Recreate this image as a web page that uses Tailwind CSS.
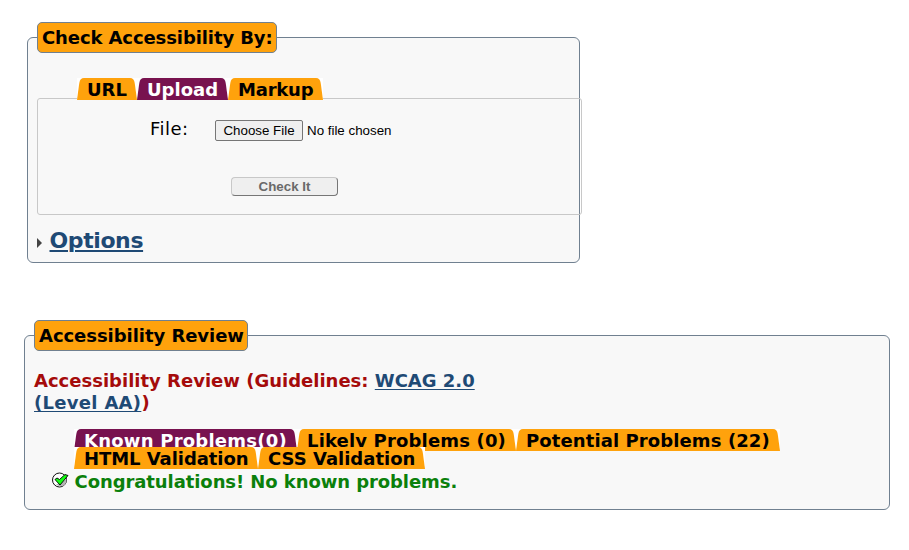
<!DOCTYPE html>
<html lang="en">
<head>
<meta charset="utf-8">
<title>Accessibility Review</title>
<script src="https://cdn.jsdelivr.net/npm/@tailwindcss/browser@4"></script>
</head>
<body class="w-[909px] h-[550px] overflow-hidden bg-white text-black font-['DejaVu_Sans',sans-serif] text-[18px] leading-[22px]">
<svg class="hidden">
  <symbol id="l" viewBox="0 0 8 22"><path d="M0 22 L2.3 5 Q3 0 7 0 H8 V22Z" fill="currentColor"/></symbol>
  <symbol id="r" viewBox="0 0 8 22"><path d="M8 22 L5.7 5 Q5 0 1 0 H0 V22Z" fill="currentColor"/></symbol>
</svg>
<main class="flow-root">
  <section class="mt-[37px] ml-[27px] w-[553px] h-[226px] border border-[#708090] rounded-[6px] bg-[#f8f8f8]">
    <h2 class="-mt-[16px] ml-[9px] w-[240px] h-[31px] border border-[#708090] rounded-[5px] bg-[#ffa20c] font-bold pl-[4px] leading-[29px] tracking-[-0.1px] whitespace-nowrap">Check Accessibility By:</h2>
    <nav class="relative flex mt-[25px] ml-[49px] h-[22px] font-bold whitespace-nowrap">
      <a class="flex bg-white text-[#ffa20c] w-[60px]"><svg class="w-[8px] h-[22px]"><use href="#l"/></svg><span class="w-[44px] bg-[#ffa20c] text-black pl-[2px] leading-[24px]">URL</span><svg class="w-[8px] h-[22px]"><use href="#r"/></svg></a>
      <a class="flex bg-white text-[#78124f] w-[91px]"><svg class="w-[8px] h-[22px]"><use href="#l"/></svg><span class="w-[75px] bg-[#78124f] text-white pl-[2px] leading-[24px]">Upload</span><svg class="w-[8px] h-[22px]"><use href="#r"/></svg></a>
      <a class="flex bg-white text-[#ffa20c] w-[95px]"><svg class="w-[8px] h-[22px]"><use href="#l"/></svg><span class="w-[79px] bg-[#ffa20c] text-black pl-[2px] leading-[24px] tracking-[-0.2px]">Markup</span><svg class="w-[8px] h-[22px]"><use href="#r"/></svg></a>
    </nav>
    <div class="-mt-[2px] ml-[9px] w-[545px] h-[117px] border border-[#c8c8c8] rounded-[3px]">
      <div class="flex pt-[21px] pl-[112px] h-[42px]">
        <label class="w-[65px] leading-[18px] tracking-[0.5px]">File:</label>
        <button class="w-[88px] h-[21px] border border-[#767676] rounded-[2px] bg-[#efefef] font-['Liberation_Sans',sans-serif] text-[13.33px] leading-[19px] whitespace-nowrap">Choose File</button>
        <span class="ml-[4px] font-['Liberation_Sans',sans-serif] text-[13.33px] leading-[21px] whitespace-nowrap">No file chosen</span>
      </div>
      <button class="block mt-[36px] ml-[193px] w-[107px] h-[19px] border border-[#c8c8c8] border-r-[#767676] border-b-[#767676] rounded-[4px] bg-[#efefef] text-[#696969] font-bold font-['Liberation_Sans',sans-serif] text-[13.33px] leading-[17px]">Check It</button>
    </div>
    <div class="flex mt-[13px] ml-[9px] font-bold text-[22px] leading-[26px] text-[#1f4a75]">
      <svg class="w-[6px] h-[10px] mt-[10px] mr-[6.5px]" viewBox="0 0 6 10"><path d="M0 0 L5 5 L0 10Z" fill="#444"/></svg>
      <a class="underline decoration-2 underline-offset-[2px] tracking-[-0.4px]">Options</a>
    </div>
  </section>
  <section class="mt-[72px] ml-[24px] w-[866px] h-[175px] border border-[#708090] rounded-[6px] bg-[#f8f8f8] font-bold">
    <h2 class="-mt-[16px] ml-[9px] w-[214px] h-[31px] border border-[#708090] rounded-[5px] bg-[#ffa20c] pl-[4px] leading-[29px] tracking-[-0.05px] whitespace-nowrap">Accessibility Review</h2>
    <h3 class="mt-[19px] ml-[9px] text-[#a50b0b] whitespace-nowrap">Accessibility Review (Guidelines: <a class="text-[#1f4a75] underline decoration-1 underline-offset-[2px]">WCAG 2.0<br><span class="tracking-[0.3px]">(Level AA)</span></a>)</h3>
    <nav class="mt-[15px] ml-[49px] whitespace-nowrap">
      <div class="flex h-[22px]">
        <a class="flex bg-white text-[#78124f] w-[223px]"><svg class="w-[8px] h-[22px]"><use href="#l"/></svg><span class="w-[207px] bg-[#78124f] text-white pl-[2px] leading-[24px] tracking-[0.23px]">Known Problems(0)</span><svg class="w-[8px] h-[22px]"><use href="#r"/></svg></a>
        <a class="flex bg-white text-[#ffa20c] w-[219px]"><svg class="w-[8px] h-[22px]"><use href="#l"/></svg><span class="w-[203px] bg-[#ffa20c] text-black pl-[2px] leading-[24px] tracking-[0.16px]">Likely Problems (0)</span><svg class="w-[8px] h-[22px]"><use href="#r"/></svg></a>
        <a class="flex bg-white text-[#ffa20c] w-[264px]"><svg class="w-[8px] h-[22px]"><use href="#l"/></svg><span class="w-[248px] bg-[#ffa20c] text-black pl-[2px] leading-[24px] tracking-[0.1px]">Potential Problems (22)</span><svg class="w-[8px] h-[22px]"><use href="#r"/></svg></a>
      </div>
      <div class="relative flex h-[22px] -mt-[4px]">
        <a class="flex bg-white text-[#ffa20c] w-[184px]"><svg class="w-[8px] h-[22px]"><use href="#l"/></svg><span class="w-[168px] bg-[#ffa20c] text-black pl-[2px] leading-[24px] tracking-[-0.06px]">HTML Validation</span><svg class="w-[8px] h-[22px]"><use href="#r"/></svg></a>
        <a class="flex bg-white text-[#ffa20c] w-[167px]"><svg class="w-[8px] h-[22px]"><use href="#l"/></svg><span class="w-[151px] bg-[#ffa20c] text-black pl-[2px] leading-[24px]">CSS Validation</span><svg class="w-[8px] h-[22px]"><use href="#r"/></svg></a>
      </div>
    </nav>
    <p class="flex mt-[2px] ml-[27px] text-[#0b800b] whitespace-nowrap">
      <svg class="w-[17px] h-[16px] mt-[1px] mr-[5.5px]" viewBox="0 0 17 16"><circle cx="7.5" cy="8" r="7" fill="#fff" stroke="#111" stroke-width="1"/><path d="M4 12.5 Q8 15.5 12 13.5 Q14.5 11.5 14.5 7 L8 11Z" fill="#b4b4b4"/><path d="M3 7.5 L5 6 L7.5 7.5 L13 2.5 L16 3.5 L8 13Z" fill="#1f1" stroke="#000" stroke-width="0.9"/></svg>
      <span class="tracking-[-0.08px]">Congratulations! No known problems.</span>
    </p>
  </section>
</main>
</body>
</html>
